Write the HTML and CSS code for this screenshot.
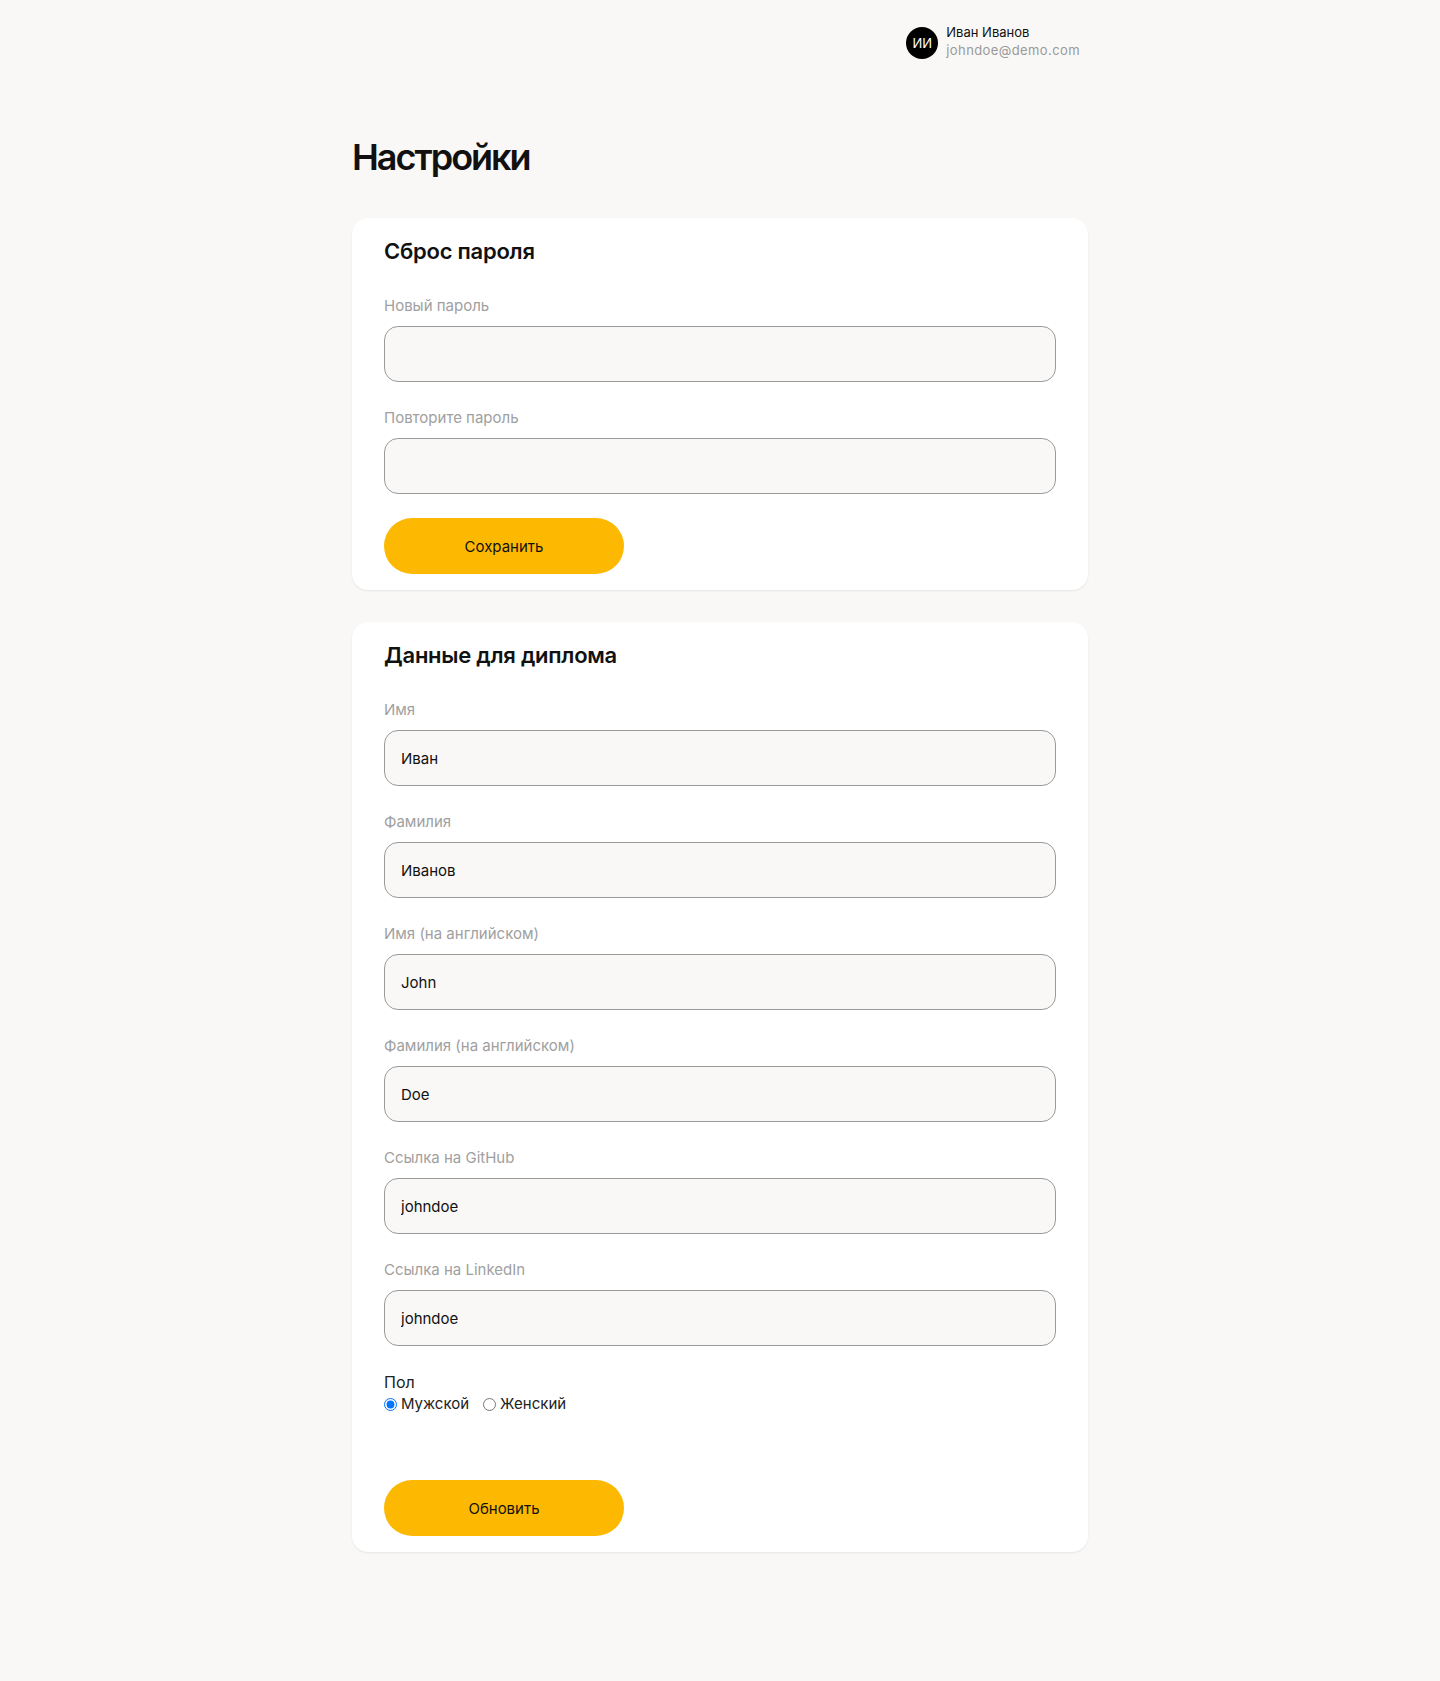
FILE: index.html
```html
<!DOCTYPE html>
<html lang="ru">
<head>
<meta charset="utf-8">
<title>Настройки</title>
<link rel="stylesheet" href="styles.css">
</head>
<body>
<header class="topbar">
  <div class="user">
    <div class="avatar">ИИ</div>
    <div class="user-info">
      <div class="user-name">Иван Иванов</div>
      <div class="user-email">johndoe@demo.com</div>
    </div>
  </div>
</header>
<main class="page">
  <h1 class="page-title">Настройки</h1>

  <section class="card">
    <h2 class="card-title">Сброс пароля</h2>
    <div class="field">
      <label class="field-label">Новый пароль</label>
      <input class="field-input" type="password">
    </div>
    <div class="field">
      <label class="field-label">Повторите пароль</label>
      <input class="field-input" type="password">
    </div>
    <button class="btn">Сохранить</button>
  </section>

  <section class="card">
    <h2 class="card-title">Данные для диплома</h2>
    <div class="field">
      <label class="field-label">Имя</label>
      <input class="field-input" type="text" value="Иван">
    </div>
    <div class="field">
      <label class="field-label">Фамилия</label>
      <input class="field-input" type="text" value="Иванов">
    </div>
    <div class="field">
      <label class="field-label">Имя (на английском)</label>
      <input class="field-input" type="text" value="John">
    </div>
    <div class="field">
      <label class="field-label">Фамилия (на английском)</label>
      <input class="field-input" type="text" value="Doe">
    </div>
    <div class="field">
      <label class="field-label">Ссылка на GitHub</label>
      <input class="field-input" type="text" value="johndoe">
    </div>
    <div class="field">
      <label class="field-label">Ссылка на LinkedIn</label>
      <input class="field-input" type="text" value="johndoe">
    </div>
    <div class="gender">
      <div class="gender-label">Пол</div>
      <div class="radios">
        <label class="radio"><input type="radio" name="sex" checked> Мужской</label>
        <label class="radio"><input type="radio" name="sex"> Женский</label>
      </div>
    </div>
    <button class="btn">Обновить</button>
  </section>
</main>
</body>
</html>
```

FILE: styles.css
```css
* { box-sizing: border-box; }
html, body {
  margin: 0;
  padding: 0;
  background: #f9f8f6;
  font-family: Inter, "Noto Sans", sans-serif;
  color: #111;
}
.topbar {
  width: 736px;
  margin: 0 auto;
  padding: 23px 8px 0 0;
  display: flex;
  justify-content: flex-end;
}
.user {
  display: flex;
  align-items: center;
  gap: 8px;
}
.avatar {
  width: 32px;
  height: 32px;
  border-radius: 50%;
  background: #000;
  color: #fff;
  font-size: 13px;
  display: flex;
  align-items: center;
  justify-content: center;
  margin-top: 4px;
}
.user-name {
  font-size: 13px;
  line-height: 18px;
  color: #111;
}
.user-email {
  font-size: 13px;
  line-height: 18px;
  color: #9a9a9a;
  letter-spacing: 0.4px;
}
.page {
  width: 736px;
  margin: 0 auto;
  padding-bottom: 120px;
}
.page-title {
  font-size: 36px;
  line-height: 48px;
  font-weight: 600;
  margin: 74px 0 37px;
  letter-spacing: -2px;
}
.card {
  background: #fff;
  border-radius: 16px;
  padding: 17px 32px 16px;
  box-shadow: 0 1px 2px rgba(0,0,0,0.08);
  margin-bottom: 32px;
}
.card-title {
  font-size: 22px;
  line-height: 32px;
  font-weight: 600;
  margin: 0 0 27px;
  letter-spacing: -0.25px;
}
.field {
  display: flex;
  flex-direction: column;
  gap: 8px;
  margin-bottom: 24px;
}
.field-label {
  font-size: 15px;
  line-height: 24px;
  color: #a0a0a0;
}
.field-input {
  height: 56px;
  border: 1px solid #9a9a9a;
  border-radius: 14px;
  background: #f9f8f6;
  padding: 0 16px;
  font-family: inherit;
  font-size: 15px;
  color: #111;
  outline: none;
}
.gender {
  margin-bottom: 66px;
}
.gender-label {
  font-size: 16px;
  line-height: 24px;
  color: #222;
}
.radios {
  display: flex;
  gap: 14px;
}
.radio {
  font-size: 15px;
  line-height: 20px;
  color: #222;
  display: flex;
  align-items: center;
}
.radio input {
  margin: 0 4px 0 0;
  width: 13px;
  height: 13px;
}
.btn {
  display: block;
  width: 240px;
  height: 56px;
  border: none;
  border-radius: 28px;
  background: #fdb901;
  color: #111;
  font-family: inherit;
  font-size: 15px;
  cursor: pointer;
}
```
